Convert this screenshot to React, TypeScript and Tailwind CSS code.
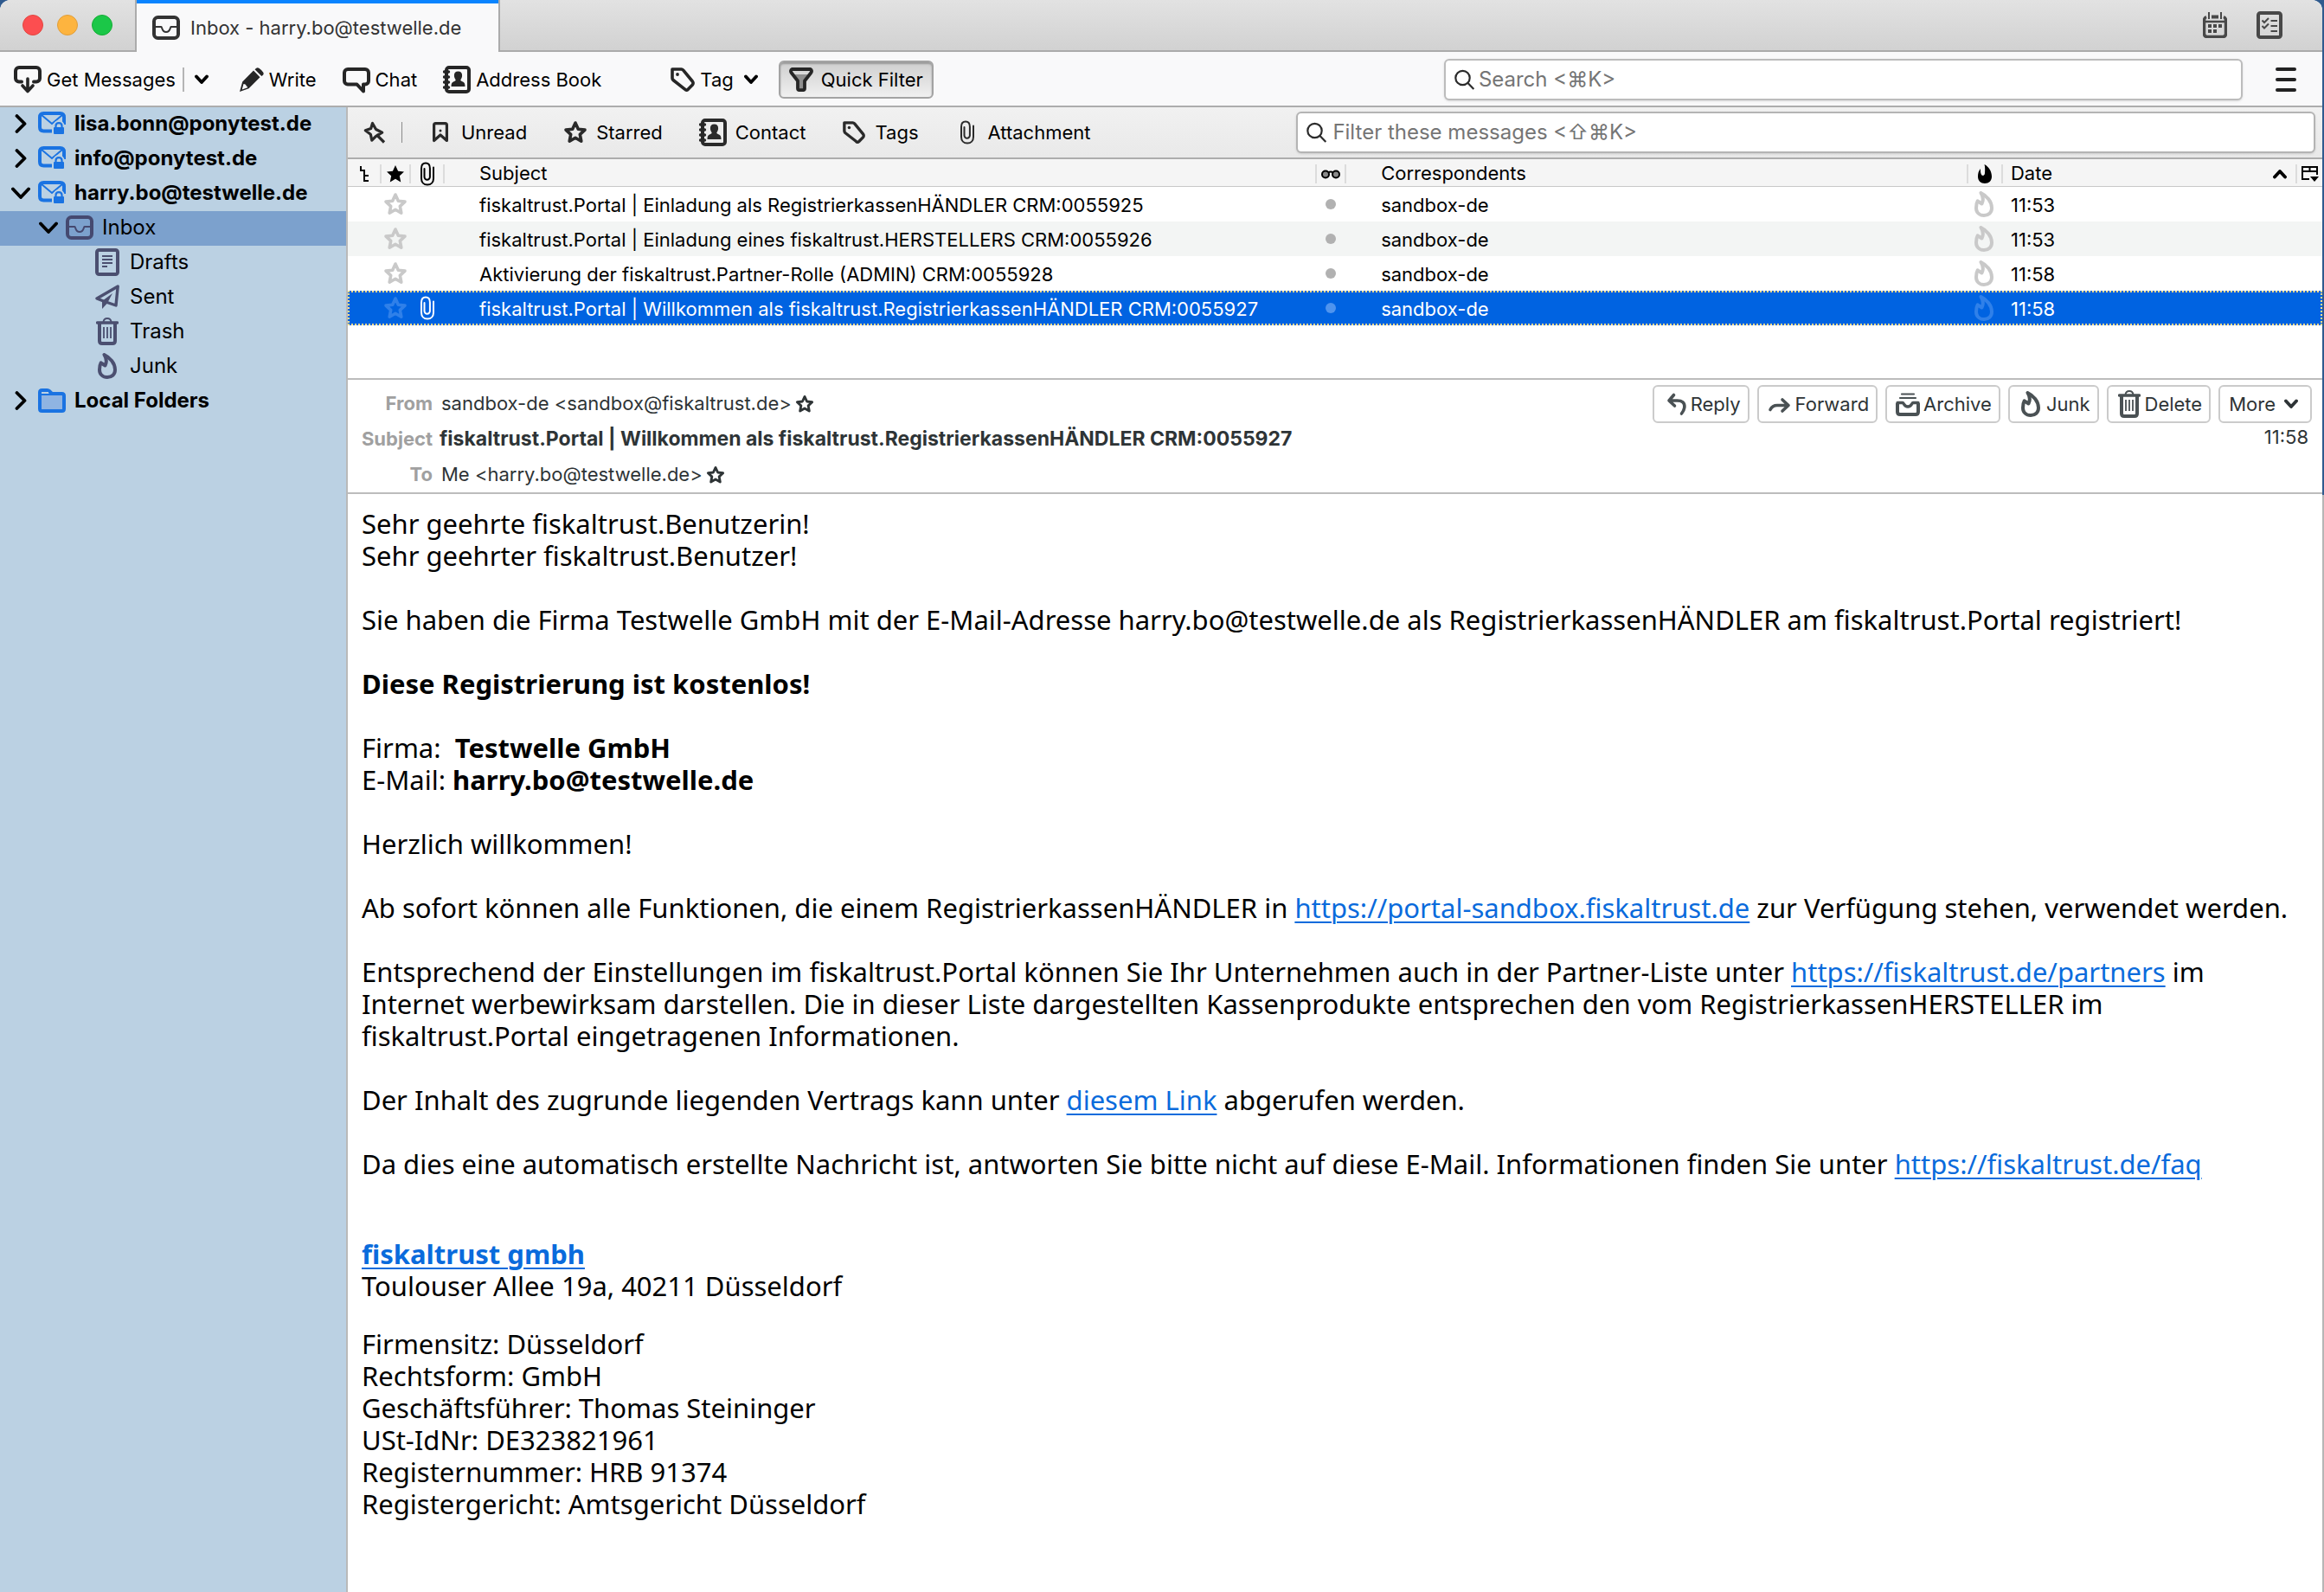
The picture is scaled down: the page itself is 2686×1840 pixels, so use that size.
import React from 'react';

type IconProps = { className?: string };

const STAR = 'M14 3l3.3 7.2 7.7.9-5.7 5.3 1.5 7.8L14 20.3 7.200 24.200l1.5-7.8L3 11.100l7.700-.9z';

function InboxIcon({ className = '' }: IconProps) {
  return (
    <svg viewBox="0 0 32 28" className={`h-7 w-8 shrink-0 ${className}`} fill="none" stroke="currentColor" aria-hidden="true">
      <rect x="2" y="2" width="28" height="24" rx="4.500" strokeWidth="4" />
      <path d="M3 13h7.500c.8 0 .5 6 5.500 6s4.700-6 5.500-6H29" strokeWidth="2" />
    </svg>
  );
}

function CalendarIcon() {
  return (
    <svg viewBox="0 0 28 30" className="h-[30px] w-7" fill="none" stroke="currentColor" aria-hidden="true">
      <path d="M4 5.500Q1.500 6.500 1.500 9.500V25q0 3.500 3.500 3.500h18q3.500 0 3.500-3.500V9.500q0-3-2.500-4" strokeWidth="3.500" />
      <path d="M3 11h22" strokeWidth="2.500" />
      <path d="M7 0v8M21 0v8" strokeWidth="2" />
      <path d="M10 5.500h8" strokeWidth="4" />
      <path d="M6 16h4M12 16h4M18 16h4M6 22h4M12 22h4" strokeWidth="4" />
    </svg>
  );
}

function TasksIcon() {
  return (
    <svg viewBox="0 0 30 32" className="h-8 w-[30px]" fill="none" stroke="currentColor" aria-hidden="true">
      <rect x="2" y="2" width="26" height="28" rx="2.500" strokeWidth="4" />
      <path d="M6.500 10.500l2.500 2.500 5-5M6.500 17l2.500 2.500 5-5" strokeWidth="2" />
      <path d="M16.500 11H24M16.500 17H24M16.500 23H24" strokeWidth="2" />
    </svg>
  );
}

function GetMessagesIcon() {
  return (
    <svg viewBox="0 0 32 32" className="size-8" fill="none" stroke="currentColor" aria-hidden="true">
      <path d="M9 18.500H6a4 4 0 0 1-4-4V6a4 4 0 0 1 4-4h20a4 4 0 0 1 4 4v8.500a4 4 0 0 1-4 4h-3" strokeWidth="4" strokeLinecap="round" />
      <path d="M16 15v14M10 23l6 6.500 6-6.500" strokeWidth="3.600" strokeLinecap="round" strokeLinejoin="round" />
    </svg>
  );
}

function PencilIcon() {
  return (
    <svg viewBox="0 0 28 28" className="size-7" fill="currentColor" aria-hidden="true">
      <path fillRule="evenodd" d="M0 28l3.200-11.500L16 3.500l7.500 7.800-13 12.900zM4.500 19l-1.800 6.500L9 23.300q.3-1.500-1.300-1.800-.2-2.300-3.200-2.500z" />
      <path d="M17.500 2.200L19.300.8q1.200-1.200 3 0 3 2 5 5 .9 1.500-.3 3l-1.700 1.300z" />
    </svg>
  );
}

function ChatIcon() {
  return (
    <svg viewBox="0 0 32 32" className="size-8" fill="none" stroke="currentColor" strokeWidth="4" strokeLinejoin="round" aria-hidden="true">
      <path d="M6 4h20a4 4 0 0 1 4 4v9.500a4 4 0 0 1-4 4h-2V29.500l-7.500-8H6a4 4 0 0 1-4-4V8a4 4 0 0 1 4-4z" />
    </svg>
  );
}

function AddressBookIcon() {
  return (
    <svg viewBox="0 0 32 32" className="size-8" aria-hidden="true">
      <rect x="4" y="2" width="26" height="28" rx="3" fill="none" stroke="currentColor" strokeWidth="4" />
      <path d="M0 8h5M0 14h5M0 20h5M0 26h5" stroke="currentColor" strokeWidth="3.400" strokeLinecap="round" transform="translate(1.500 -1)" />
      <path d="M17.500 6.500c3.200 0 4.600 2 4.600 4.800 0 2.700-1.200 3.900-1.800 5 0 1.200 1 1.600 2.700 2.300 1.700.8 2.500 2 2.500 5.400h-16c0-3.400.8-4.600 2.500-5.400 1.700-.7 2.700-1.100 2.700-2.300-.6-1.100-1.800-2.300-1.800-5 0-2.800 1.400-4.800 4.600-4.800z" fill="currentColor" />
    </svg>
  );
}

function TagIcon({ className = 'size-7' }: IconProps) {
  return (
    <svg viewBox="0 0 28 28" className={className} aria-hidden="true">
      <path d="M2 2h10.500q1.200 0 2.200 1.100L25.300 16q1.500 2 .1 4l-5.200 5.300q-1.900 1.700-3.700-.2L3 14.500q-1-1-1-2.300z" fill="none" stroke="currentColor" strokeWidth="3.600" strokeLinejoin="round" />
      <circle cx="8" cy="8" r="1.900" fill="currentColor" />
    </svg>
  );
}

function FunnelIcon() {
  return (
    <svg viewBox="0 0 28 28" className="size-7" aria-hidden="true">
      <path d="M6.500 8h15L17 15v10h-6V15z" fill="#8f8f8f" />
      <path d="M3.500 2h21q2.500 1.500.9 4L18 15.500V24q0 2.200-2.200 2.200h-3.600Q10 26.200 10 24v-8.500L2.600 6Q1 3.500 3.500 2z" fill="none" stroke="currentColor" strokeWidth="3.800" strokeLinejoin="round" />
    </svg>
  );
}

function SearchIcon() {
  return (
    <svg viewBox="0 0 24 24" className="size-6 shrink-0" fill="none" stroke="#2b2b2b" strokeWidth="2.200" aria-hidden="true">
      <circle cx="9.500" cy="10" r="8.200" />
      <path d="M15.300 15.800l7 7.200" />
    </svg>
  );
}

function ChevronDown({ className = '' }: IconProps) {
  return (
    <svg viewBox="0 0 16 12" className={`h-3 w-4 ${className}`} fill="none" stroke="currentColor" strokeWidth="3.800" strokeLinecap="round" strokeLinejoin="round" aria-hidden="true">
      <path d="M2 2.500l6 6.500 6-6.500" />
    </svg>
  );
}

function PinIcon() {
  return (
    <svg viewBox="0 0 26 26" className="size-[26px]" fill="none" stroke="currentColor" strokeWidth="3.200" strokeLinejoin="round" aria-hidden="true">
      <path d="M10.500 2.500L8.700 8.500l-6.400 2.300 6 4.400 1.500 7 4.500-4.600 7.400-4.400-7.200-3.700z" />
      <path d="M15 15.500l9 9" />
    </svg>
  );
}

function BookmarkIcon() {
  return (
    <svg viewBox="0 0 28 28" className="size-7" aria-hidden="true">
      <path d="M6.600 23.500V5.500q0-1.900 1.900-1.900h11q1.900 0 1.900 1.900v18L14 17z" fill="none" stroke="currentColor" strokeWidth="3.200" strokeLinejoin="round" />
      <circle cx="14" cy="12" r="1.500" fill="currentColor" />
    </svg>
  );
}

function StarIcon({ className = 'size-7' }: IconProps) {
  return (
    <svg viewBox="0 0 28 28" className={className} fill="none" stroke="currentColor" strokeWidth="3.600" strokeLinejoin="round" aria-hidden="true">
      <path d={STAR} />
    </svg>
  );
}

function SolidStarIcon() {
  return (
    <svg viewBox="2 2 24 24" className="mx-auto size-5" fill="currentColor" aria-hidden="true">
      <path d="M14 2l3.700 8 8.300 1-6.200 5.700 1.700 8.800-7.500-4.600-7.500 4.600 1.700-8.800L2 11l8.300-1z" />
    </svg>
  );
}

function ClipIcon({ className = '' }: IconProps) {
  return (
    <svg viewBox="0 0 18 28" className={`h-7 w-[18px] ${className}`} fill="none" stroke="currentColor" strokeWidth="2" strokeLinecap="round" aria-hidden="true">
      <path d="M5.500 8v9.500a3.200 3.200 0 0 0 6.400 0V8.500M16 6.500v12.700c0 4.600-2.900 7.300-7 7.300s-7-2.700-7-7.300V7.500C2 3.800 3.900 1.500 7 1.500s4.900 2.300 4.900 6v3" />
    </svg>
  );
}

function FlameIcon({ className = 'h-[30px] w-[22px]' }: IconProps) {
  return (
    <svg viewBox="0 0 22 30" className={className} fill="none" stroke="currentColor" strokeWidth="4" strokeLinejoin="round" aria-hidden="true">
      <path d="M7.500 2C14 5 20 12 20 19.300c0 5.500-3.800 8.700-9 8.700s-9-3.400-9-8.800c0-3 .2-5.200 1.700-7.900l4.800 3.200C10.600 10.500 10 6 7.500 2z" />
    </svg>
  );
}

function SolidFlameIcon() {
  return (
    <svg viewBox="0 0 16 22" className="mx-auto h-[22px] w-4" fill="currentColor" aria-hidden="true">
      <path d="M7.500 0C12.500 2.500 16 8 16 14c0 5-3.400 8-8 8s-8-3-8-8c0-4 1.200-7 3-9-.2 3.500.2 6 1.500 7.500 1.800 1.200 3.500-.3 3.500-2.500C8.200 7 8.500 3.500 7.500 0z" />
    </svg>
  );
}

function TrashIcon({ className = '' }: IconProps) {
  return (
    <svg viewBox="0 0 26 32" className={`h-8 w-[26px] ${className}`} fill="none" stroke="currentColor" aria-hidden="true">
      <path d="M8.500 5c.4-2.700 2-4 4.500-4s4.100 1.300 4.500 4" strokeWidth="2" />
      <path d="M1.500 6h23" strokeWidth="3.400" strokeLinecap="round" />
      <path d="M4 7v20q0 3 3 3h12q3 0 3-3V7" strokeWidth="4" />
      <path d="M9 11v13M13 11v13M17 11v13" strokeWidth="1.800" />
    </svg>
  );
}

function AccountIcon() {
  return (
    <svg viewBox="0 0 32 28" className="h-7 w-8 shrink-0" fill="none" stroke="#1a73e2" aria-hidden="true">
      <path d="M16 22.500H6.500Q2 22.500 2 18V6.500Q2 2 6.500 2h19Q30 2 30 6.500V15" strokeWidth="4" />
      <path d="M3.500 3.500L16 14 28.500 3.500" strokeWidth="2" />
      <path d="M20.500 19v-2.500c0-4.600 7-4.600 7 0V19" strokeWidth="6" stroke="#bbd1e3" />
      <path d="M20.500 20v-3.500c0-4.600 7-4.600 7 0V20" strokeWidth="2.200" />
      <rect x="18" y="18" width="12" height="8" rx="1" fill="#1a73e2" stroke="none" />
    </svg>
  );
}

function FolderIcon() {
  return (
    <svg viewBox="0 0 32 28" className="h-7 w-8 shrink-0" aria-hidden="true">
      <path d="M2 7V4.500Q2 2 4.500 2h6Q12 2 13 3l3 3H27.500Q30 6 30 8.500v15q0 2.500-2.500 2.500h-23Q2 26 2 23.500z" fill="#8fb4e2" stroke="#1a73e2" strokeWidth="4" strokeLinejoin="round" />
      <path d="M3 7h25" stroke="#1a73e2" strokeWidth="2" />
      <path d="M4 5h8" stroke="#bbd1e3" strokeWidth="2" />
    </svg>
  );
}

function DraftsIcon() {
  return (
    <svg viewBox="0 0 28 32" className="h-8 w-7" fill="none" stroke="currentColor" aria-hidden="true">
      <rect x="2" y="2" width="24" height="28" rx="2.500" strokeWidth="4" />
      <path d="M8 9h12M8 13h12M8 17h12M8 21h6" strokeWidth="2" />
    </svg>
  );
}

function SentIcon() {
  return (
    <svg viewBox="0 0 28 28" className="size-7" aria-hidden="true">
      <path d="M26.200 2L2 16l7.500 3L24 24z" fill="none" stroke="currentColor" strokeWidth="3.400" strokeLinejoin="round" />
      <path d="M20 10L8 19v9l6-6.500z" fill="currentColor" />
    </svg>
  );
}

function ReplyIcon() {
  return (
    <svg viewBox="0 0 28 28" className="size-7" fill="none" stroke="currentColor" strokeWidth="3.600" strokeLinecap="round" strokeLinejoin="round" aria-hidden="true">
      <path d="M12.500 3.500L7 10l6.500 6M7.500 10h9c5.500 0 9 2.500 8.300 8-.4 3-1.700 5-3.300 7" />
    </svg>
  );
}

function ForwardIcon() {
  return (
    <svg viewBox="0 0 28 28" className="size-7" fill="none" stroke="currentColor" strokeWidth="3.600" strokeLinecap="round" strokeLinejoin="round" aria-hidden="true">
      <path d="M17 9l7 6.500-7 6.500M24 15.500H11c-4 0-6.500 2-8 5" />
    </svg>
  );
}

function ArchiveIcon() {
  return (
    <svg viewBox="0 0 28 28" className="size-7" fill="none" stroke="currentColor" aria-hidden="true">
      <path d="M7 2.500h14M5 7h18" strokeWidth="2.200" strokeLinecap="round" />
      <path d="M2 13v10q0 3 3 3h18q3 0 3-3V13" strokeWidth="4" />
      <path d="M2 12.500h6c1.500 0 1.500 4.500 6 4.500s4.500-4.500 6-4.500h6" strokeWidth="3.400" strokeLinecap="round" />
    </svg>
  );
}

function ThreadIcon() {
  return (
    <svg viewBox="0 0 12 18" className="mx-auto h-[18px] w-3" fill="none" stroke="currentColor" strokeWidth="2" aria-hidden="true">
      <path d="M2 0v5h4v12h5M6 11h5" />
    </svg>
  );
}

function GlassesIcon() {
  return (
    <svg viewBox="0 0 22 12" className="mx-auto h-3 w-[22px]" fill="#8a8a8a" stroke="currentColor" strokeWidth="2" aria-hidden="true">
      <circle cx="5" cy="6.500" r="4" />
      <circle cx="17" cy="6.500" r="4" />
      <path d="M8 4.500q3-2 6 0" fill="none" />
    </svg>
  );
}

function ColumnsIcon() {
  return (
    <svg viewBox="0 0 20 20" className="mx-auto size-5" fill="none" stroke="currentColor" strokeWidth="2" aria-hidden="true">
      <path d="M9 16H1V2h17v9M1 7h17M9.500 2v6" />
      <path d="M10 13h10l-5 6z" fill="currentColor" stroke="none" />
    </svg>
  );
}

function Twisty({ open }: { open: boolean }) {
  return open ? (
    <svg viewBox="0 0 22 22" className="size-[22px] shrink-0" fill="none" stroke="currentColor" strokeWidth="3.800" strokeLinecap="round" strokeLinejoin="round" aria-hidden="true">
      <path d="M2 6.500l9 9.500 9-9.500" />
    </svg>
  ) : (
    <svg viewBox="0 0 22 22" className="size-[22px] shrink-0" fill="none" stroke="currentColor" strokeWidth="3.800" strokeLinecap="round" strokeLinejoin="round" aria-hidden="true">
      <path d="M6.500 2l9 9-9 9" />
    </svg>
  );
}

function Account({ name, open, icon }: { name: string; open: boolean; icon: React.ReactNode }) {
  return (
    <button type="button" className="flex h-10 w-full items-center pb-0.5 pl-[13px] font-bold">
      <Twisty open={open} />
      <span className="ml-[9px]">{icon}</span>
      <span className="ml-2.5">{name}</span>
    </button>
  );
}

function Folder({ name, icon }: { name: string; icon: React.ReactNode }) {
  return (
    <button type="button" className="flex h-10 w-full items-center pb-0.5 pl-[110px]">
      <span className="flex w-7 shrink-0 justify-center text-[#4b4f70]">{icon}</span>
      <span className="ml-3">{name}</span>
    </button>
  );
}

function Sidebar() {
  return (
    <nav aria-label="Folders" className="w-[402px] shrink-0 border-r-2 border-[#b9b9b9] bg-[#bbd1e3] text-2xl text-black">
      <Account name="lisa.bonn@ponytest.de" open={false} icon={<AccountIcon />} />
      <Account name="info@ponytest.de" open={false} icon={<AccountIcon />} />
      <Account name="harry.bo@testwelle.de" open icon={<AccountIcon />} />
      <button type="button" aria-current="true" className="flex h-10 w-full items-center bg-[#7ca1cd] pb-0.5 pl-[45px]">
        <Twisty open />
        <InboxIcon className="ml-[9px] text-[#454970]" />
        <span className="ml-2.5">Inbox</span>
      </button>
      <Folder name="Drafts" icon={<DraftsIcon />} />
      <Folder name="Sent" icon={<SentIcon />} />
      <Folder name="Trash" icon={<TrashIcon />} />
      <Folder name="Junk" icon={<FlameIcon />} />
      <Account name="Local Folders" open={false} icon={<FolderIcon />} />
    </nav>
  );
}

function TitleBar() {
  return (
    <header className="flex h-[60px] bg-linear-to-b from-[#e2e2e2] to-[#d1d1d1]">
      <div className="flex w-[158px] items-center gap-4 border-r-2 border-b-2 border-[#ababab] pl-[26px]">
        <button type="button" aria-label="Close" className="size-6 rounded-full border border-[#e2463f] bg-[#fc4e50]" />
        <button type="button" aria-label="Minimize" className="size-6 rounded-full border border-[#e09e3b] bg-[#fdb43f]" />
        <button type="button" aria-label="Zoom" className="size-6 rounded-full border border-[#14ae35] bg-[#1bc748]" />
      </div>
      <div role="tab" aria-selected="true" className="flex w-[418px] items-center border-t-4 border-[#0a84ff] bg-[#f9f9fa] pl-[18px] text-[22px] text-[#333]">
        <InboxIcon />
        <span className="ml-3">Inbox - harry.bo@testwelle.de</span>
      </div>
      <div className="flex flex-1 items-center justify-end gap-[34px] border-b-2 border-l-2 border-[#ababab] pr-[46px] text-[#484848]">
        <button type="button" aria-label="Calendar"><CalendarIcon /></button>
        <button type="button" aria-label="Tasks"><TasksIcon /></button>
      </div>
    </header>
  );
}

function ToolButton({ icon, children }: { icon: React.ReactNode; children: React.ReactNode }) {
  return (
    <button type="button" className="flex shrink-0 items-center gap-1.5">
      <span className="text-[#262626]">{icon}</span>
      {children}
    </button>
  );
}

function Toolbar() {
  return (
    <div role="toolbar" aria-label="Mail" className="flex h-16 items-center border-b-2 border-[#adadad] bg-[#f9f9fa] pt-0.5 pl-4 text-[22px] text-black">
      <ToolButton icon={<GetMessagesIcon />}>Get Messages</ToolButton>
      <span className="mr-3 ml-2 h-7 w-0.5 bg-[#b5b5b5]" />
      <button type="button" aria-label="Get messages options"><ChevronDown /></button>
      <div className="ml-9 flex gap-[30px]">
        <ToolButton icon={<PencilIcon />}>Write</ToolButton>
        <ToolButton icon={<ChatIcon />}>Chat</ToolButton>
        <ToolButton icon={<AddressBookIcon />}>Address Book</ToolButton>
      </div>
      <div className="ml-20 flex items-center">
        <ToolButton icon={<TagIcon />}>
          <span>Tag</span>
          <ChevronDown className="ml-1.5" />
        </ToolButton>
      </div>
      <button type="button" aria-pressed="true" className="ml-6 flex h-11 items-center gap-[9px] rounded-md border-2 border-[#a3a3a3] bg-linear-to-b from-[#cfcfcf] to-[#f0f0f0] px-2.5 shadow-[inset_0_2px_2px_#999999]">
        <span className="text-[#262626]"><FunnelIcon /></span>
        Quick Filter
      </button>
      <label className="ml-auto flex h-12 w-[34.6%] items-center gap-1 rounded-md border-2 border-[#bcbcbc] bg-white pl-2.5 shadow-sm">
        <SearchIcon />
        <input type="search" aria-label="Search" placeholder="Search <⌘K>" className="w-full bg-transparent text-2xl outline-none placeholder:text-[#757575]" />
      </label>
      <button type="button" aria-label="Menu" className="mr-[30px] ml-[38px] flex w-6 flex-col gap-2">
        <span className="h-1 rounded-full bg-[#222]" />
        <span className="h-1 rounded-full bg-[#222]" />
        <span className="h-1 rounded-full bg-[#222]" />
      </button>
    </div>
  );
}

function FilterButton({ icon, children }: { icon: React.ReactNode; children: React.ReactNode }) {
  return (
    <button type="button" className="flex shrink-0 items-center gap-2.5">
      <span className="flex min-w-7 justify-center text-[#2a2a2a]">{icon}</span>
      {children}
    </button>
  );
}

function FilterBar() {
  return (
    <div role="toolbar" aria-label="Quick filter" className="flex h-[60px] items-center border-b-2 border-[#adadad] bg-linear-to-b from-[#f1f1f1] to-[#e9e9e9] pr-2 pl-[18px] text-[22px] text-black">
      <button type="button" aria-label="Keep filters" className="text-[#2a2a2a]"><PinIcon /></button>
      <span className="ml-[18px] h-6 w-px bg-[#8a8a8a]" />
      <div className="ml-[30px] flex gap-[42px]">
        <FilterButton icon={<BookmarkIcon />}>Unread</FilterButton>
        <FilterButton icon={<StarIcon />}>Starred</FilterButton>
        <FilterButton icon={<AddressBookIcon />}>Contact</FilterButton>
        <FilterButton icon={<TagIcon className="size-[26px]" />}>Tags</FilterButton>
        <FilterButton icon={<ClipIcon />}>Attachment</FilterButton>
      </div>
      <label className="ml-auto flex h-12 w-[52.2%] items-center gap-1.5 rounded-md border-2 border-[#b4b4b4] bg-white pl-2.5 shadow-sm">
        <SearchIcon />
        <input type="search" aria-label="Filter these messages" placeholder="Filter these messages <⇧⌘K>" className="w-full bg-transparent text-2xl outline-none placeholder:text-[#757575]" />
      </label>
    </div>
  );
}

type Message = { subject: string; from: string; time: string; attachment?: boolean; selected?: boolean };

const messages: Message[] = [
  { subject: 'fiskaltrust.Portal | Einladung als RegistrierkassenHÄNDLER CRM:0055925', from: 'sandbox-de', time: '11:53' },
  { subject: 'fiskaltrust.Portal | Einladung eines fiskaltrust.HERSTELLERS CRM:0055926', from: 'sandbox-de', time: '11:53' },
  { subject: 'Aktivierung der fiskaltrust.Partner-Rolle (ADMIN) CRM:0055928', from: 'sandbox-de', time: '11:58' },
  { subject: 'fiskaltrust.Portal | Willkommen als fiskaltrust.RegistrierkassenHÄNDLER CRM:0055927', from: 'sandbox-de', time: '11:58', attachment: true, selected: true },
];

function HeadCell({ label, divider = true, className = '', children }: { label?: string; divider?: boolean; className?: string; children?: React.ReactNode }) {
  return (
    <th scope="col" aria-label={label} className="h-8 border-b border-[#c8c8c8] p-0 pt-0.5 text-left font-normal">
      <div className={`flex h-[22px] items-center ${divider ? 'border-r-2 border-[#dcdcdc]' : ''} ${className}`}>{children}</div>
    </th>
  );
}

function MessageList() {
  return (
    <section className="border-b-2 border-[#bcbcbc] bg-white pb-[61px]">
      <table className="w-full table-fixed border-separate border-spacing-0 text-[22px] text-black">
        <colgroup>
          <col className="w-[39px]" />
          <col className="w-[34px]" />
          <col className="w-[39px]" />
          <col />
          <col className="w-[34px]" />
          <col className="w-[31.5%]" />
          <col className="w-10" />
          <col className="w-[14.9%]" />
          <col className="w-[29px]" />
        </colgroup>
        <thead className="bg-[#f5f5f5]">
          <tr>
            <HeadCell label="Thread"><ThreadIcon /></HeadCell>
            <HeadCell label="Starred"><SolidStarIcon /></HeadCell>
            <HeadCell label="Attachments"><ClipIcon className="mx-auto" /></HeadCell>
            <HeadCell className="pl-10">Subject</HeadCell>
            <HeadCell label="Read"><GlassesIcon /></HeadCell>
            <HeadCell className="pl-10">Correspondents</HeadCell>
            <HeadCell label="Junk"><SolidFlameIcon /></HeadCell>
            <HeadCell className="justify-between pr-[10px] pl-[9px]">
              Date
              <ChevronDown className="rotate-180" />
            </HeadCell>
            <HeadCell label="Select columns" divider={false}><ColumnsIcon /></HeadCell>
          </tr>
        </thead>
        <tbody>
          {messages.map((m) => (
            <tr
              key={m.subject}
              aria-selected={m.selected}
              className={
                m.selected
                  ? 'bg-[#0063e1] text-white outline-2 -outline-offset-2 outline-[#ffdd8a] outline-dotted'
                  : 'even:bg-[#f3f5f4]'
              }
            >
              <td className="h-10 p-0" />
              <td className="p-0 pr-0.5">
                <StarIcon className={m.selected ? 'mx-auto size-7 text-[#2f80e9]' : 'mx-auto size-7 text-[#c9c9c9]'} />
              </td>
              <td className="p-0 pr-0.5">{m.attachment && <ClipIcon className="mx-auto" />}</td>
              <td className="truncate p-0 pt-0.5 pl-10">{m.subject}</td>
              <td className="p-0 pr-0.5">
                <span className={m.selected ? 'mx-auto block size-3 rounded-full bg-[#4f94ee]' : 'mx-auto block size-3 rounded-full bg-[#b1b1b1]'} />
              </td>
              <td className="p-0 pt-0.5 pl-10">{m.from}</td>
              <td className="p-0 pr-1">
                <FlameIcon className={m.selected ? 'mx-auto h-[30px] w-[22px] text-[#2f80e9]' : 'mx-auto h-[30px] w-[22px] text-[#c9c9c9]'} />
              </td>
              <td className="p-0 pt-0.5 pl-[9px]">{m.time}</td>
              <td className="p-0" />
            </tr>
          ))}
        </tbody>
      </table>
    </section>
  );
}

function ActionButton({ icon, children }: { icon?: React.ReactNode; children: React.ReactNode }) {
  return (
    <button type="button" className="flex h-11 shrink-0 items-center gap-1 rounded-md border-2 border-[#cbcbcb] bg-white pr-2 pl-2.5">
      {icon && <span className="flex w-7 justify-center text-[#4a5154]">{icon}</span>}
      {children}
    </button>
  );
}

function HeaderRow({ label, children }: { label: string; children: React.ReactNode }) {
  return (
    <div className="flex h-[41px] items-center gap-2">
      <dt className="w-[98px] text-right font-bold text-[#a0a0a0]">{label}</dt>
      <dd className="flex items-center gap-1">{children}</dd>
    </div>
  );
}

function MessageHeader() {
  return (
    <section className="flex justify-between border-b-2 border-[#bcbcbc] bg-white text-[22px] text-[#2e3436]">
      <dl className="pt-[7px]">
        <HeaderRow label="From">
          <span className="pl-0.5">sandbox-de &lt;sandbox@fiskaltrust.de&gt;</span>
          <button type="button" aria-label="Star sender"><StarIcon className="size-[22px]" /></button>
        </HeaderRow>
        <HeaderRow label="Subject">
          <span className="text-[23px] font-bold">fiskaltrust.Portal | Willkommen als fiskaltrust.RegistrierkassenHÄNDLER CRM:0055927</span>
        </HeaderRow>
        <HeaderRow label="To">
          <span className="pl-0.5">Me &lt;harry.bo@testwelle.de&gt;</span>
          <button type="button" aria-label="Star recipient"><StarIcon className="size-[22px]" /></button>
        </HeaderRow>
      </dl>
      <div className="pt-1.5 pr-3">
        <div className="flex gap-[9px]">
          <ActionButton icon={<ReplyIcon />}>Reply</ActionButton>
          <ActionButton icon={<ForwardIcon />}>Forward</ActionButton>
          <ActionButton icon={<ArchiveIcon />}>Archive</ActionButton>
          <ActionButton icon={<FlameIcon />}>Junk</ActionButton>
          <ActionButton icon={<TrashIcon />}>Delete</ActionButton>
          <ActionButton>
            More
            <ChevronDown className="mr-1.5 ml-1.5" />
          </ActionButton>
        </div>
        <time className="block pr-1 text-right">11:58</time>
      </div>
    </section>
  );
}

function MailLink({ children }: { children: React.ReactNode }) {
  return <a href="#" className="text-[#0a6bdc] underline decoration-2 underline-offset-4">{children}</a>;
}

function MessageBody() {
  return (
    <article lang="de" className="flex-1 bg-white px-4 pt-4 font-['Noto_Sans',sans-serif] text-[31px] leading-[37px] text-black">
      <p className="mb-[37px]">
        Sehr geehrte fiskaltrust.Benutzerin!
        <br />
        Sehr geehrter fiskaltrust.Benutzer!
      </p>
      <p className="mb-[37px]">
        Sie haben die Firma Testwelle GmbH mit der E-Mail-Adresse harry.bo@testwelle.de als RegistrierkassenHÄNDLER am fiskaltrust.Portal registriert!
      </p>
      <p className="mb-[37px] font-bold">Diese Registrierung ist kostenlos!</p>
      <p className="mb-[37px]">
        Firma:&nbsp; <b>Testwelle GmbH</b>
        <br />
        E-Mail: <b>harry.bo@testwelle.de</b>
      </p>
      <p className="mb-[37px]">Herzlich willkommen!</p>
      <p className="mb-[37px]">
        Ab sofort können alle Funktionen, die einem RegistrierkassenHÄNDLER in <MailLink>https://portal-sandbox.fiskaltrust.de</MailLink> zur Verfügung stehen, verwendet werden.
      </p>
      <p className="mb-[37px]">
        Entsprechend der Einstellungen im fiskaltrust.Portal können Sie Ihr Unternehmen auch in der Partner-Liste unter <MailLink>https://fiskaltrust.de/partners</MailLink> im Internet werbewirksam darstellen. Die in dieser Liste dargestellten Kassenprodukte entsprechen den vom RegistrierkassenHERSTELLER im fiskaltrust.Portal eingetragenen Informationen.
      </p>
      <p className="mb-[37px]">
        Der Inhalt des zugrunde liegenden Vertrags kann unter <MailLink>diesem Link</MailLink> abgerufen werden.
      </p>
      <p className="mb-[67px]">
        Da dies eine automatisch erstellte Nachricht ist, antworten Sie bitte nicht auf diese E-Mail. Informationen finden Sie unter <MailLink>https://fiskaltrust.de/faq</MailLink>
      </p>
      <p className="mb-[30px]">
        <b><MailLink>fiskaltrust gmbh</MailLink></b>
        <br />
        Toulouser Allee 19a, 40211 Düsseldorf
      </p>
      <p>
        Firmensitz: Düsseldorf
        <br />
        Rechtsform: GmbH
        <br />
        Geschäftsführer: Thomas Steininger
        <br />
        USt-IdNr: DE323821961
        <br />
        Registernummer: HRB 91374
        <br />
        Registergericht: Amtsgericht Düsseldorf
      </p>
    </article>
  );
}

export default function App() {
  return (
    <div className="min-h-screen bg-[linear-gradient(to_bottom,#2f5a8e_572px,#b5b5b5_572px)] pr-0.5 font-['Inter','Liberation_Sans',sans-serif]">
      <div className="flex min-h-screen flex-col overflow-hidden rounded-t-xl bg-white">
        <TitleBar />
        <Toolbar />
        <div className="flex flex-1">
          <Sidebar />
          <main className="flex min-w-0 flex-1 flex-col">
            <FilterBar />
            <MessageList />
            <MessageHeader />
            <MessageBody />
          </main>
        </div>
      </div>
    </div>
  );
}
